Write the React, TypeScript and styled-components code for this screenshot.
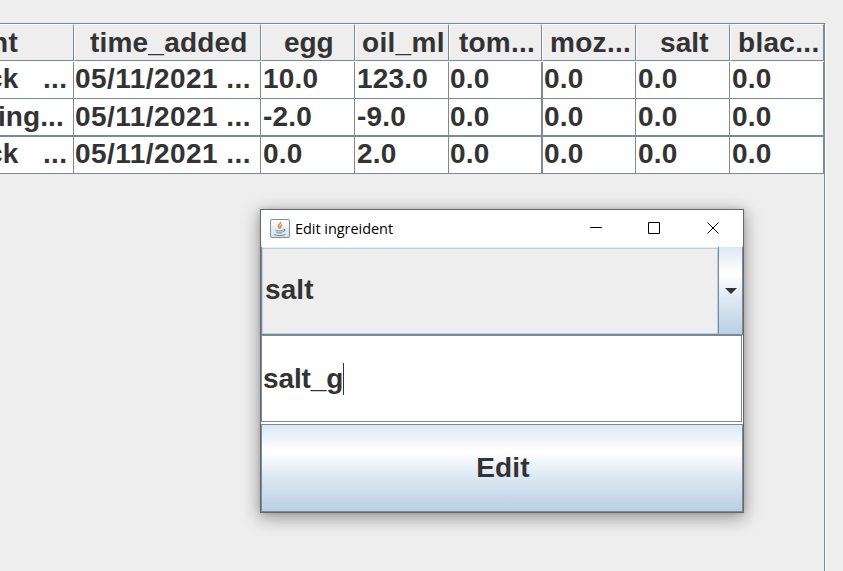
import React from "react";
import styled, { createGlobalStyle } from "styled-components";

const LINE = "#7a8a99";
const FACE = "#eeeeee";
const INK = "#333333";
const METAL = "linear-gradient(to bottom, #dde8f3 0%, #ffffff 30%, #ffffff 31%, #dde8f3 60%, #b8cfe5 100%)";

const GlobalStyle = createGlobalStyle`
  * { box-sizing: border-box; }
  body { margin: 0; background: ${FACE}; overflow: hidden; }
`;

const Desktop = styled.main`
  position: relative;
  width: 843px;
  height: 571px;
  padding-top: 23px;
  overflow: hidden;
  background: ${FACE};
  color: ${INK};
  font: bold 28px/32px "Liberation Sans", Arial, sans-serif;
`;

const ScrollPane = styled.section`
  width: 826px;
  height: 548px;
  border-top: 1px solid ${LINE};
  border-right: 1px solid #fff;
  box-shadow: inset -1px 0 0 ${LINE};
`;

const HeaderRow = styled.div`
  display: grid;
  grid-template-columns: 74px 187px 94px 94px 93px 94px 94px 94px;
  width: 824px;
  height: 38px;
  border-bottom: 1px solid #f8f9fb;
`;

const HeaderCell = styled.div<{ $spacing: number; $shift: number }>`
  height: 37px;
  padding-top: 2px;
  border: 1px solid ${LINE};
  border-top-color: #fff;
  border-left-color: #fff;
  overflow: hidden;
  white-space: pre;
  text-indent: ${(p) => p.$shift}px;
  letter-spacing: ${(p) => p.$spacing}px;

  &:first-child {
    border-left: 0;
  }
`;

const BodyRow = styled.div<{ $height: number; $thick?: boolean }>`
  display: grid;
  grid-template-columns: 74px 187px 94px 94px 94px 93px 94px 94px;
  width: 824px;
  height: ${(p) => p.$height}px;
  background: #fff;
  border-bottom: ${(p) => (p.$thick ? 2 : 1)}px solid ${LINE};
`;

const Cell = styled.div<{ $thick: boolean; $indent: number; $top: number; $spacing: number }>`
  padding-top: ${(p) => p.$top}px;
  border-right: ${(p) => (p.$thick ? 2 : 1)}px solid ${LINE};
  overflow: hidden;
  white-space: pre;
  text-indent: ${(p) => p.$indent}px;
  letter-spacing: ${(p) => p.$spacing}px;
  min-width: 0;
`;

const Dialog = styled.section`
  position: absolute;
  left: 260px;
  top: 209px;
  width: 484px;
  height: 304px;
  display: flex;
  flex-direction: column;
  border: 1px solid #66696c;
  background: #fff;
  box-shadow: 0 4px 16px 1px rgba(0, 0, 0, 0.36), 0 0 5px rgba(0, 0, 0, 0.12);
`;

const TitleBar = styled.header`
  display: flex;
  align-items: center;
  height: 37px;
  padding-left: 9px;
  background: #fff;
`;

const Title = styled.span`
  flex: 1;
  margin-left: 5px;
  color: #000;
  font: 400 14.5px/20px "Open Sans", "Noto Sans", sans-serif;
  letter-spacing: -0.05px;
`;

const WindowControls = styled.div`
  display: flex;
  gap: 46px;
  padding: 0 24px 2px 0;

  svg:last-child {
    margin-left: 1px;
  }
`;

const Combo = styled.div`
  display: flex;
  height: 88px;
  border-left: 1px solid ${LINE};
  border-bottom: 1px solid ${LINE};
`;

const ComboValue = styled.div`
  flex: 1;
  padding: 25px 0 0 2px;
  margin-top: 1px;
  border: 1px solid #b8cfe5;
  box-shadow: 0 -1px 0 #e8edf2;
  background: ${FACE};
  letter-spacing: 0.1px;
`;

const ArrowButton = styled.button`
  width: 25px;
  padding: 1px 0 0;
  border: solid ${LINE};
  border-width: 0 1px;
  border-radius: 0;
  background: ${METAL};
  display: flex;
  align-items: center;
  justify-content: center;
`;

const TextField = styled.div`
  display: flex;
  height: 87px;
  margin-right: 1px;
  padding: 27px 0 0 1px;
  border: 1px solid ${LINE};
  background: #fff;
  letter-spacing: -0.1px;
`;

const Caret = styled.span`
  width: 1px;
  height: 32px;
  background: ${INK};
`;

const EditButton = styled.button`
  height: 88px;
  margin-top: 2px;
  padding: 0 0 1px 2px;
  border: 1px solid ${LINE};
  border-radius: 0;
  background: ${METAL};
  color: ${INK};
  font: inherit;
  letter-spacing: 0.1px;
`;

const headers = [
  { text: "nt", shift: -9, spacing: 0.3 },
  { text: "time_added", shift: 15, spacing: 0.2 },
  { text: "egg", shift: 22, spacing: -0.1 },
  { text: "oil_ml", shift: 6, spacing: 0.3 },
  { text: "tom...", shift: 9, spacing: 0.2 },
  { text: "moz...", shift: 7, spacing: 0.3 },
  { text: "salt", shift: 23, spacing: 0.1 },
  { text: "blac...", shift: 7, spacing: 0.3 },
];

const rows = [
  { height: 37, top: 1, start: -13, cells: ["ck   ...", "05/11/2021 ...", "10.0", "123.0", "0.0", "0.0", "0.0", "0.0"] },
  { height: 38, top: 2, start: -11.5, cells: ["ting...", "05/11/2021 ...", "-2.0", "-9.0", "0.0", "0.0", "0.0", "0.0"] },
  { height: 37, top: 1, start: -13, cells: ["ck   ...", "05/11/2021 ...", "0.0", "2.0", "0.0", "0.0", "0.0", "0.0"] },
];

const indents = [0, 1, 2, 2, 1, 1, 2, 2];

function JavaIcon() {
  return (
    <svg width="20" height="20" viewBox="0 0 20 20" fill="none">
      <defs>
        <linearGradient id="tile" x2="0" y2="1">
          <stop stopColor="#fff" />
          <stop offset="1" stopColor="#d9dfe5" />
        </linearGradient>
      </defs>
      <rect x=".5" y=".5" width="19" height="18" rx="1.5" fill="url(#tile)" stroke="#7a8fa3" />
      <path d="M10.500 3c1 2-3.500 3-2 5 .5.8 1 1 1.200 1.700M12 6c-2 1-2 2-.7 3.200" stroke="#ea8a3d" strokeWidth="1.600" />
      <path d="M5 10.500c2 1 6 1 8 0l-1 3.500c-1.500.8-4 .8-5.500 0z" fill="#8ba0b4" />
      <path d="M13.500 10.500c2-.3 2 1.500-.8 2.200M4 15.500c3 1.400 8.500 1.400 11.500 0" stroke="#7890a8" strokeWidth="1.200" />
      <path d="M6 12.300c2 .6 4.500.6 6.500 0" stroke="#dce4eb" strokeWidth=".7" />
    </svg>
  );
}

function ControlIcon({ d }: { d: string }) {
  return (
    <svg width="12" height="12" viewBox="0 0 12 12" fill="none" stroke="#000">
      <path d={d} />
    </svg>
  );
}

export default function App() {
  return (
    <Desktop>
      <GlobalStyle />
      <ScrollPane>
        <HeaderRow>
          {headers.map((h) => (
            <HeaderCell key={h.text} $spacing={h.spacing} $shift={h.shift}>
              {h.text}
            </HeaderCell>
          ))}
        </HeaderRow>
        {rows.map((row, r) => (
          <BodyRow key={r} $height={row.height} $thick={r === 1}>
            {row.cells.map((text, c) => (
              <Cell
                key={c}
                $thick={c === 4}
                $indent={c === 0 ? row.start : indents[c]}
                $top={row.top}
                $spacing={c === 1 ? 0.45 : c > 1 ? 0.2 : r === 1 ? 0.1 : 0.3}
              >
                {text}
              </Cell>
            ))}
          </BodyRow>
        ))}
      </ScrollPane>
      <Dialog>
        <TitleBar>
          <JavaIcon />
          <Title>Edit ingreident</Title>
          <WindowControls>
            <ControlIcon d="M0 5.500h12" />
            <ControlIcon d="M.5.5h11v11H.5z" />
            <ControlIcon d="M.5.5l11 11M11.500.5l-11 11" />
          </WindowControls>
        </TitleBar>
        <Combo>
          <ComboValue>salt</ComboValue>
          <ArrowButton aria-label="Open list">
            <svg width="12" height="6" viewBox="0 0 12 6">
              <path d="M0 0h12L6 6z" fill={INK} />
            </svg>
          </ArrowButton>
        </Combo>
        <TextField>
          salt_g
          <Caret />
        </TextField>
        <EditButton>Edit</EditButton>
      </Dialog>
    </Desktop>
  );
}
